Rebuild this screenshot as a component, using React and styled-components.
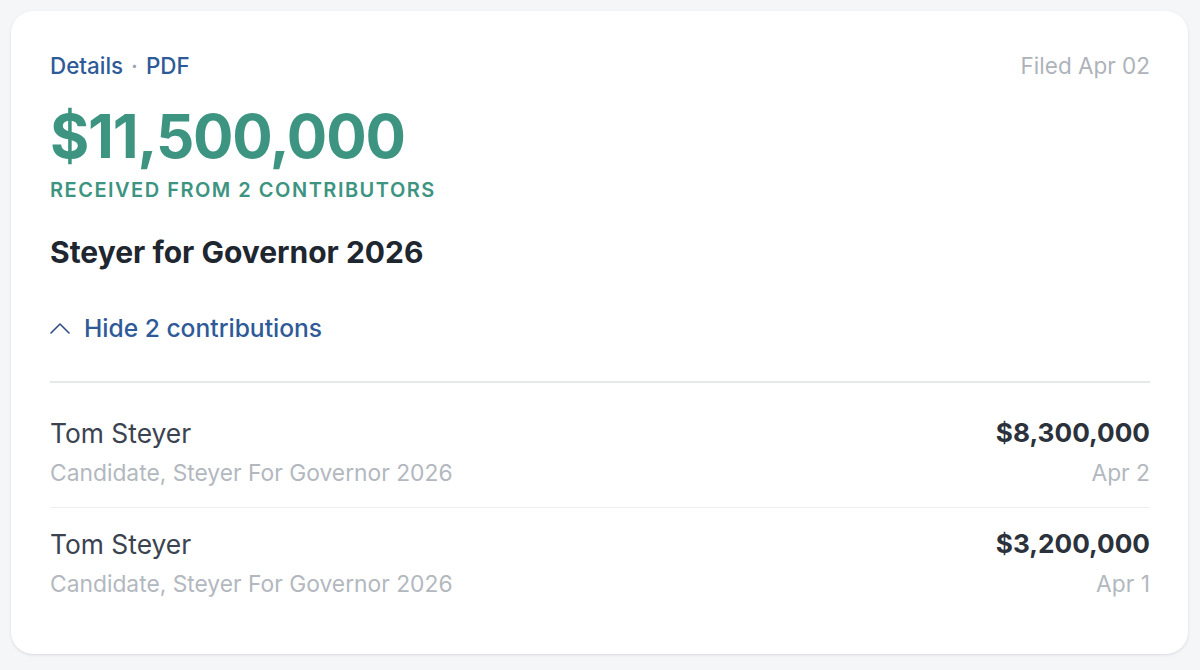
import React from 'react';
import styled, { createGlobalStyle } from 'styled-components';

const GlobalStyle = createGlobalStyle`
  html, body {
    margin: 0;
    padding: 0;
    background: #f5f6f8;
    font-family: Inter, "Noto Sans", sans-serif;
  }
`;

const Page = styled.div`
  padding: 11px 12px 16px 11px;
`;

const Card = styled.div`
  background: #fff;
  border-radius: 22px;
  box-shadow: 0 1px 3px rgba(15, 23, 42, 0.12);
  padding: 42px 38px 36px 39px;
`;

const TopBar = styled.div`
  display: flex;
  justify-content: space-between;
  align-items: center;
  line-height: 26px;
`;

const Links = styled.div`
  display: flex;
  align-items: center;
  gap: 8px;
  font-size: 22.4px;
  font-weight: 500;
`;

const LinkText = styled.a`
  color: #2f5a98;
  text-decoration: none;
`;

const Dot = styled.span`
  color: #9ca3af;
`;

const Filed = styled.div`
  font-size: 22.5px;
  color: #aeb3ba;
`;

const Total = styled.div`
  margin-top: 27px;
  font-size: 60px;
  font-weight: 700;
  color: #3c9481;
  letter-spacing: -1.2px;
  line-height: 1;
`;

const Caption = styled.div`
  margin-top: 12px;
  font-size: 20px;
  line-height: 24px;
  font-weight: 600;
  color: #3c9481;
  letter-spacing: 1.5px;
  text-transform: uppercase;
`;

const Committee = styled.h2`
  margin: 32px 0 0;
  font-size: 30px;
  line-height: 36px;
  font-weight: 700;
  color: #1e2630;
`;

const Toggle = styled.button`
  display: flex;
  align-items: center;
  gap: 14px;
  margin-top: 43px;
  padding: 0;
  border: none;
  background: none;
  font-family: inherit;
  font-size: 24.6px;
  line-height: 30px;
  font-weight: 500;
  color: #2f5a98;
  cursor: pointer;
`;

const List = styled.div`
  margin-top: 38px;
  padding-top: 14px;
  border-top: 2px solid #e6e8eb;
`;

const Row = styled.div`
  display: flex;
  justify-content: space-between;
  padding: 20px 0;
  border-bottom: ${(p) => (p.$last ? 'none' : '1px solid #eceef0')};
`;

const Col = styled.div`
  display: flex;
  flex-direction: column;
  gap: 10px;
  align-items: ${(p) => (p.$right ? 'flex-end' : 'flex-start')};
`;

const Name = styled.div`
  font-size: 26.4px;
  line-height: 32px;
  color: #3b4350;
`;

const Sub = styled.div`
  font-size: 22.8px;
  line-height: 28px;
  color: #b3b8bf;
`;

const Amount = styled.div`
  font-size: 26.2px;
  line-height: 32px;
  font-weight: 700;
  color: #2b323c;
`;

const ChevronUp = () => (
  <svg width="20" height="12" viewBox="0 0 20 12" fill="none" stroke="#2f4f85" strokeWidth="1.6" strokeLinecap="round" strokeLinejoin="round">
    <path d="M1 11L10 2l9 9" />
  </svg>
);

const App = () => {
  const contributions = [
    { name: 'Tom Steyer', role: 'Candidate, Steyer For Governor 2026', amount: '$8,300,000', date: 'Apr 2' },
    { name: 'Tom Steyer', role: 'Candidate, Steyer For Governor 2026', amount: '$3,200,000', date: 'Apr 1' },
  ];

  return (
    <Page>
      <GlobalStyle />
      <Card>
        <TopBar>
          <Links>
            <LinkText href="#">Details</LinkText>
            <Dot>·</Dot>
            <LinkText href="#">PDF</LinkText>
          </Links>
          <Filed>Filed Apr 02</Filed>
        </TopBar>
        <Total>$11,500,000</Total>
        <Caption>Received from 2 contributors</Caption>
        <Committee>Steyer for Governor 2026</Committee>
        <Toggle>
          <ChevronUp />
          Hide 2 contributions
        </Toggle>
        <List>
          {contributions.map((c, i) => (
            <Row key={i} $last={i === contributions.length - 1}>
              <Col>
                <Name>{c.name}</Name>
                <Sub>{c.role}</Sub>
              </Col>
              <Col $right>
                <Amount>{c.amount}</Amount>
                <Sub>{c.date}</Sub>
              </Col>
            </Row>
          ))}
        </List>
      </Card>
    </Page>
  );
};

export default App;
